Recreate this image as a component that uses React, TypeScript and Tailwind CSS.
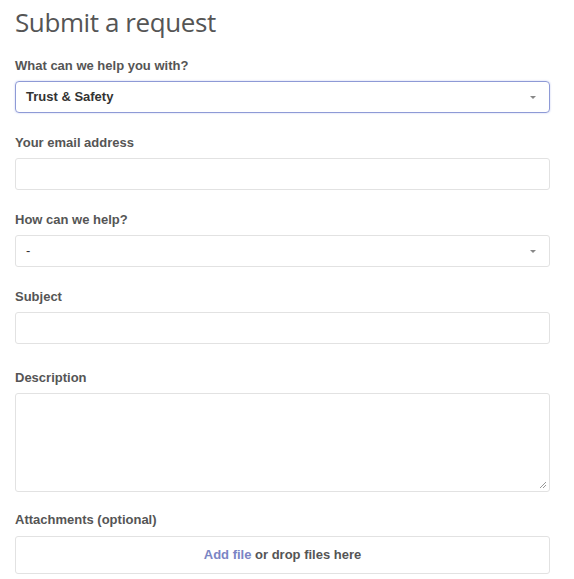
import React from "react";

function Label({ children, className = "" }: { children: React.ReactNode; className?: string }) {
  return (
    <div className={`text-[13px] leading-[20px] font-bold text-[#555] ${className}`}>{children}</div>
  );
}

function Caret() {
  return (
    <svg width="8" height="5" viewBox="0 0 8 5" className="absolute right-[12px] top-[13px]">
      <path d="M1 1 L7 1 L4 4 Z" fill="#888" />
    </svg>
  );
}

export default function App() {
  return (
    <div
      className="w-[574px] h-[579px] bg-white pl-[15px] pr-[24px] overflow-hidden"
      style={{ fontFamily: '"Liberation Sans", Arial, sans-serif' }}
    >
      <h1
        className="text-[26px] leading-[34px] font-normal tracking-[-0.4px] text-[#555] pt-[5px]"
        style={{ fontFamily: '"Open Sans", "Noto Sans", sans-serif' }}
      >
        Submit a request
      </h1>

      <Label className="mt-[17px]">What can we help you with?</Label>
      <div className="relative mt-[5px] h-[32px] rounded-[4px] border border-[#8e9ad6] shadow-[0_0_2px_rgba(100,120,220,0.4)] flex items-center px-[10px]">
        <span className="text-[13px] font-bold text-[#333]">Trust &amp; Safety</span>
        <Caret />
      </div>

      <Label className="mt-[20px]">Your email address</Label>
      <div className="mt-[5px] h-[32px] rounded-[3px] border border-[#e2e2e2]" />

      <Label className="mt-[20px]">How can we help?</Label>
      <div className="relative mt-[5px] h-[32px] rounded-[3px] border border-[#e2e2e2] flex items-center px-[10px]">
        <span className="text-[13px] text-[#333]">-</span>
        <Caret />
      </div>

      <Label className="mt-[20px]">Subject</Label>
      <div className="mt-[5px] h-[32px] rounded-[3px] border border-[#e2e2e2]" />

      <Label className="mt-[24px]">Description</Label>
      <div className="relative mt-[5px] h-[99px] rounded-[3px] border border-[#e2e2e2]">
        <svg width="10" height="10" viewBox="0 0 10 10" className="absolute right-[2px] bottom-[2px]">
          <path d="M9 3 L3 9 M9 6 L6 9" stroke="#999" strokeWidth="1" />
        </svg>
      </div>

      <Label className="mt-[18px]">Attachments (optional)</Label>
      <div className="mt-[6px] h-[38px] rounded-[3px] border border-[#e2e2e2] flex items-center justify-center text-[13px] font-bold">
        <span className="text-[#7a85c4]">Add file</span>
        <span className="text-[#555]">&nbsp;or drop files here</span>
      </div>
    </div>
  );
}
